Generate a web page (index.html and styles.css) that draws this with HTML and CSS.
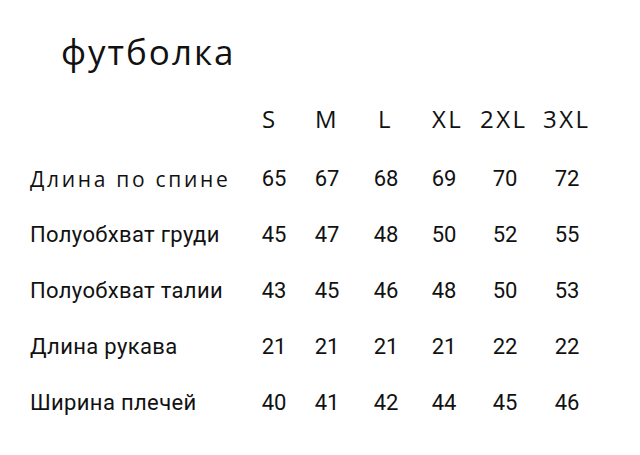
FILE: index.html
```html
<!DOCTYPE html>
<html lang="ru">
<head>
<meta charset="utf-8">
<title>футболка</title>
<link rel="stylesheet" href="styles.css">
</head>
<body>
<div class="page">
  <h1 class="title">футболка</h1>
  <div class="head">
    <div></div>
    <div>S</div><div>M</div><div>L</div><div>XL</div><div>2XL</div><div>3XL</div>
  </div>
  <div class="grid rows">
    <div class="label geo">Длина по спине</div>
    <div>65</div><div>67</div><div>68</div><div>69</div><div>70</div><div>72</div>
    <div class="label">Полуобхват груди</div>
    <div>45</div><div>47</div><div>48</div><div>50</div><div>52</div><div>55</div>
    <div class="label">Полуобхват талии</div>
    <div>43</div><div>45</div><div>46</div><div>48</div><div>50</div><div>53</div>
    <div class="label">Длина рукава</div>
    <div>21</div><div>21</div><div>21</div><div>21</div><div>22</div><div>22</div>
    <div class="label">Ширина плечей</div>
    <div>40</div><div>41</div><div>42</div><div>44</div><div>45</div><div>46</div>
  </div>
</div>
</body>
</html>
```
FILE: styles.css
```css
html, body {
  margin: 0;
  padding: 0;
  background: #ffffff;
}
body {
  color: #111111;
  font-family: Roboto, "Liberation Sans", sans-serif;
}
.page {
  width: 640px;
  height: 455px;
  padding: 0 0 0 30px;
  box-sizing: border-box;
}
.title {
  margin: 0 0 0 31px;
  box-sizing: border-box;
  padding-top: 24px;
  height: 91px;
  font-family: "Open Sans", sans-serif;
  font-weight: 400;
  font-size: 35px;
  line-height: 56px;
  letter-spacing: 2px;
}
.head {
  display: grid;
  grid-template-columns: 232px 53px 63px 54px 48px 63px 60px;
  height: 56px;
  margin-bottom: 4px;
  align-items: center;
  font-family: "Open Sans", sans-serif;
  font-size: 24px;
  line-height: 56px;
  letter-spacing: 2.5px;
}
.grid {
  display: grid;
  grid-template-columns: 218px 52px 54px 64px 52px 70px 54px;
  grid-auto-rows: 56px;
  align-items: center;
  font-size: 22px;
  line-height: 56px;
  text-align: center;
}
.label {
  text-align: left;
  white-space: nowrap;
  letter-spacing: 0.35px;
}
.geo {
  font-family: "Open Sans", sans-serif;
  font-size: 21px;
  letter-spacing: 2.7px;
}
```
